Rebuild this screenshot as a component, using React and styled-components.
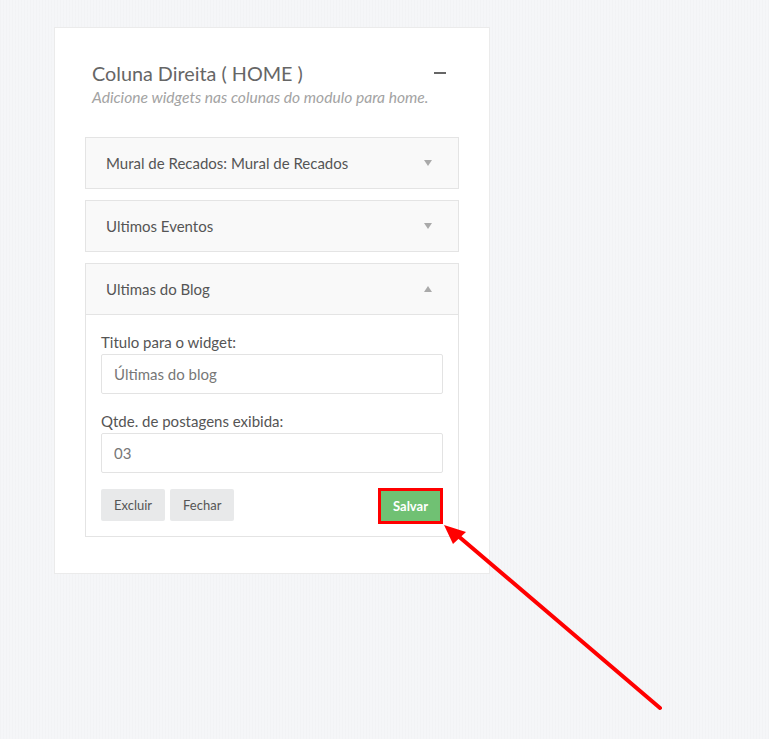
import React from 'react'
import styled, { createGlobalStyle } from 'styled-components'

const GlobalStyle = createGlobalStyle`
  html, body {
    margin: 0;
    padding: 0;
  }
  body {
    font-family: Lato, "Open Sans", "Liberation Sans", sans-serif;
    background-color: #f5f6f8;
    background-image: repeating-linear-gradient(90deg, rgba(0,0,0,0.012) 0 1px, transparent 1px 3px);
    min-height: 739px;
  }
`

const Page = styled.div`
  position: relative;
  width: 769px;
  height: 739px;
  padding: 27px 0 0 54px;
  box-sizing: border-box;
`

const Card = styled.section`
  width: 436px;
  box-sizing: border-box;
  background: #fff;
  border: 1px solid #ebebeb;
  padding: 29px 30px 36px 30px;
`

const CardHeader = styled.div`
  display: flex;
  justify-content: space-between;
  align-items: flex-start;
  padding: 0 13px 0 7px;
  margin-bottom: 30px;
`

const Title = styled.h2`
  margin: -1px 0 1px;
  font-size: 19.8px;
  font-weight: 400;
  color: #666;
  line-height: 34px;
`

const Subtitle = styled.p`
  margin: -4px 0 0;
  font-size: 15.6px;
  font-style: italic;
  color: #a3a3a3;
  line-height: 20px;
`

const Minus = styled.span`
  display: block;
  width: 12px;
  height: 2px;
  background: #666;
  margin-top: 15px;
`

const PanelList = styled.div`
  display: flex;
  flex-direction: column;
  gap: 11px;
`

const Panel = styled.div`
  border: 1px solid #e4e4e4;
  background: #fff;
`

const PanelHead = styled.div`
  display: flex;
  justify-content: space-between;
  align-items: center;
  height: 50px;
  padding: 0 26px 0 20px;
  background: #f9f9f9;
  font-size: 15px;
  color: #555;
  border-bottom: ${p => (p.$open ? '1px solid #e4e4e4' : 'none')};
`

const Caret = styled.span`
  width: 0;
  height: 0;
  border-left: 4px solid transparent;
  border-right: 4px solid transparent;
  ${p =>
    p.$up
      ? 'border-bottom: 6px solid #aaa;'
      : 'border-top: 6px solid #aaa;'}
`

const PanelBody = styled.div`
  padding: 18px 15px 12px 15px;
`

const Field = styled.div`
  margin-bottom: 18px;
`

const Label = styled.label`
  display: block;
  font-size: 15px;
  color: #555;
  line-height: 18px;
  margin-bottom: 3px;
`

const Input = styled.input`
  display: block;
  width: 100%;
  box-sizing: border-box;
  height: 40px;
  border: 1px solid #e3e3e3;
  border-radius: 2px;
  padding: 0 12px;
  font-family: inherit;
  font-size: 15px;
  color: #777;
  background: #fff;
  outline: none;
`

const Actions = styled.div`
  display: flex;
  align-items: flex-start;
  gap: 5px;
  margin-top: -2px;
`

const Button = styled.button`
  height: 32px;
  padding: 0 13px;
  border: none;
  border-radius: 2px;
  font-family: inherit;
  font-size: 13px;
  color: #555;
  background: #e8e9ea;
  cursor: pointer;
`

const SaveButton = styled(Button)`
  margin-left: auto;
  margin-top: -1px;
  height: 36px;
  width: 65px;
  padding: 0;
  background: #70c173;
  color: #fff;
  font-weight: 700;
  border: 3px solid #f00;
  border-radius: 0;
`

const Arrow = styled.svg`
  position: absolute;
  left: 0;
  top: 0;
  pointer-events: none;
`

export default function App() {
  return (
    <>
      <GlobalStyle />
      <Page>
        <Card>
          <CardHeader>
            <div>
              <Title>Coluna Direita ( HOME )</Title>
              <Subtitle>Adicione widgets nas colunas do modulo para home.</Subtitle>
            </div>
            <Minus />
          </CardHeader>
          <PanelList>
            <Panel>
              <PanelHead>
                Mural de Recados: Mural de Recados
                <Caret />
              </PanelHead>
            </Panel>
            <Panel>
              <PanelHead>
                Ultimos Eventos
                <Caret />
              </PanelHead>
            </Panel>
            <Panel>
              <PanelHead $open>
                Ultimas do Blog
                <Caret $up />
              </PanelHead>
              <PanelBody>
                <Field>
                  <Label>Titulo para o widget:</Label>
                  <Input defaultValue='Últimas do blog' />
                </Field>
                <Field>
                  <Label>Qtde. de postagens exibida:</Label>
                  <Input defaultValue='03' />
                </Field>
                <Actions>
                  <Button>Excluir</Button>
                  <Button>Fechar</Button>
                  <SaveButton>Salvar</SaveButton>
                </Actions>
              </PanelBody>
            </Panel>
          </PanelList>
        </Card>
        <Arrow width='769' height='739' viewBox='0 0 769 739'>
          <line x1='660' y1='708' x2='457' y2='535' stroke='#f00' strokeWidth='4' strokeLinecap='round' />
          <polygon points='444,525 466,532 453,544' fill='#f00' />
        </Arrow>
      </Page>
    </>
  )
}
